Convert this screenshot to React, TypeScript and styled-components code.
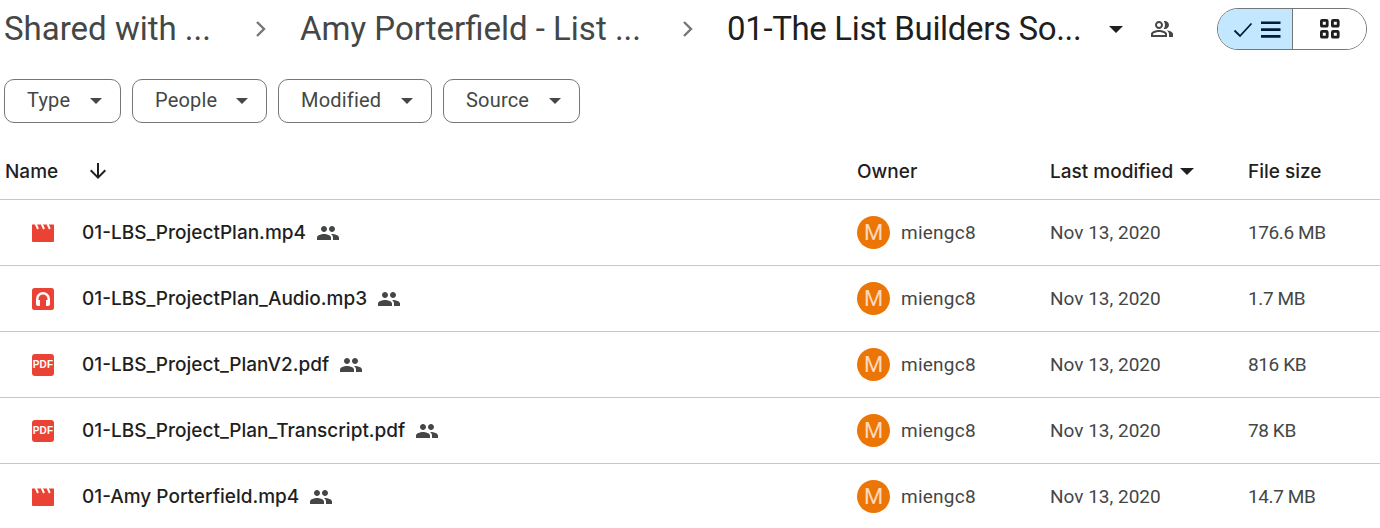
import React from "react";
import styled, { createGlobalStyle } from "styled-components";

type FileKind = "video" | "audio" | "pdf";

type FileRow = {
  name: string;
  kind: FileKind;
  size: string;
};

const files: FileRow[] = [
  { name: "01-LBS_ProjectPlan.mp4", kind: "video", size: "176.6 MB" },
  { name: "01-LBS_ProjectPlan_Audio.mp3", kind: "audio", size: "1.7 MB" },
  { name: "01-LBS_Project_PlanV2.pdf", kind: "pdf", size: "816 KB" },
  { name: "01-LBS_Project_Plan_Transcript.pdf", kind: "pdf", size: "78 KB" },
  { name: "01-Amy Porterfield.mp4", kind: "video", size: "14.7 MB" },
];

const filters = [
  { label: "Type", width: 117 },
  { label: "People", width: 135 },
  { label: "Modified", width: 154 },
  { label: "Source", width: 137 },
];

const GlobalStyle = createGlobalStyle`
  html, body {
    margin: 0;
    padding: 0;
    background: #fff;
    overflow: hidden;
  }
  body {
    font-family: Roboto, "Liberation Sans", sans-serif;
    color: #1f1f1f;
  }
`;

const Chevron = () => (
  <svg width="24" height="24" viewBox="0 0 24 24" fill="none" stroke="#747775" strokeWidth="2.4">
    <path d="M8 5l7 7-7 7" />
  </svg>
);

const SharedIcon = () => (
  <svg width="24" height="24" viewBox="0 0 24 24" fill="#444746">
    <path d="M15 8c0-1.42-.5-2.73-1.33-3.76.42-.14.86-.24 1.33-.24 2.21 0 4 1.79 4 4s-1.79 4-4 4c-.43 0-.84-.09-1.23-.21-.03-.01-.06-.02-.1-.03A5.98 5.98 0 0 0 15 8zm1.66 5.13C18.03 14.06 19 15.32 19 17v3h4v-3c0-2.18-3.58-3.47-6.34-3.87zM9 6c-1.1 0-2 .9-2 2s.9 2 2 2 2-.9 2-2-.9-2-2-2m0 6c-2.21 0-4-1.79-4-4s1.79-4 4-4 4 1.79 4 4-1.79 4-4 4zm0 3c-2.7 0-5.8 1.29-6 2.01V18h12v-1c-.2-.71-3.3-2-6-2zm0-2c2.67 0 8 1.34 8 4v3H1v-3c0-2.66 5.33-4 8-4z" />
  </svg>
);

const PeopleIcon = () => (
  <svg width="24" height="24" viewBox="0 0 24 24" fill="#444746">
    <path d="M16 11c1.66 0 2.99-1.34 2.99-3S17.66 5 16 5s-3 1.34-3 3 1.34 3 3 3zm-8 0c1.66 0 2.99-1.34 2.99-3S9.66 5 8 5 5 6.34 5 8s1.34 3 3 3zm0 2c-2.33 0-7 1.17-7 3.5V19h14v-2.5C15 14.17 10.33 13 8 13zm8 0c-.29 0-.62.02-.97.05 1.16.84 1.97 1.97 1.97 3.45V19h6v-2.5c0-2.33-4.67-3.5-7-3.5z" />
  </svg>
);

const FileIcon = ({ kind }: { kind: FileKind }) => {
  if (kind === "video") {
    return (
      <svg width="24" height="24" viewBox="0 0 24 24">
        <path fill="#ea4335" d="M1 3.5h22V20a1 1 0 0 1-1 1H2a1 1 0 0 1-1-1z" />
        <path stroke="#fff" strokeWidth="1.9" fill="none" d="M4.8 3l2.2 5M10.8 3l2.2 5M16.6 3l2.2 5" />
      </svg>
    );
  }
  if (kind === "audio") {
    return (
      <svg width="24" height="24" viewBox="0 0 24 24">
        <rect x="1" y="1" width="22" height="22" rx="2.5" fill="#ea4335" />
        <path
          fill="#fff"
          d="M12 5a7 7 0 0 0-7 7v5a2 2 0 0 0 2 2h2v-6H7.5v-1a4.5 4.5 0 0 1 9 0v1H15v6h2a2 2 0 0 0 2-2v-5a7 7 0 0 0-7-7z"
        />
      </svg>
    );
  }
  return (
    <PdfBadge>
      <span>PDF</span>
    </PdfBadge>
  );
};

export default function App() {
  return (
    <Page>
      <GlobalStyle />
      <Breadcrumbs>
        <Crumb $width={218}>Shared with ...</Crumb>
        <CrumbSeparator>
          <Chevron />
        </CrumbSeparator>
        <Crumb $width={349}>Amy Porterfield - List ...</Crumb>
        <CrumbSeparator>
          <Chevron />
        </CrumbSeparator>
        <Crumb $width={355} $current>
          01-The List Builders So...
        </Crumb>
        <TitleCaret />
        <OwnersIcon>
          <SharedIcon />
        </OwnersIcon>
        <ViewToggle>
          <ToggleHalf $active>
            <svg width="20" height="24" viewBox="0 0 20 24" fill="none" stroke="#001d35" strokeWidth="1.8">
              <path d="M1.5 13.5l5.5 5.5L18.5 6.5" />
            </svg>
            <svg width="20" height="24" viewBox="0 0 20 24" fill="#001d35">
              <path d="M0 4.500h19.500v2.600H0zM0 11.300h19.500v2.600H0zM0 18.100h19.500v2.600H0z" />
            </svg>
          </ToggleHalf>
          <ToggleHalf>
            <svg width="20" height="20" viewBox="0 0 20 20" fill="none" stroke="#1f1f1f" strokeWidth="2.800">
              <rect x="1.400" y="1.400" width="5.800" height="5.800" rx="0.800" />
              <rect x="12.400" y="1.400" width="5.800" height="5.800" rx="0.800" />
              <rect x="1.400" y="12.400" width="5.800" height="5.800" rx="0.800" />
              <rect x="12.400" y="12.400" width="5.800" height="5.800" rx="0.800" />
            </svg>
          </ToggleHalf>
        </ViewToggle>
      </Breadcrumbs>

      <FilterBar>
        {filters.map((filter) => (
          <FilterButton key={filter.label} $width={filter.width}>
            {filter.label}
            <SmallCaret />
          </FilterButton>
        ))}
      </FilterBar>

      <HeaderRow>
        <NameHeader>
          Name
          <svg width="24" height="24" viewBox="0 0 24 24" fill="#1f1f1f">
            <path d="M11 4h2v12.200l5.600-5.600L20 12l-8 8-8-8 1.400-1.400 5.600 5.600z" />
          </svg>
        </NameHeader>
        <span>Owner</span>
        <ModifiedHeader>
          Last modified
          <HeaderCaret />
        </ModifiedHeader>
        <span>File size</span>
      </HeaderRow>

      {files.map((file) => (
        <Row key={file.name}>
          <NameCell>
            <IconSlot>
              <FileIcon kind={file.kind} />
            </IconSlot>
            <FileName>{file.name}</FileName>
            <PeopleIcon />
          </NameCell>
          <OwnerCell>
            <Avatar>M</Avatar>
            miengc8
          </OwnerCell>
          <MutedCell>Nov 13, 2020</MutedCell>
          <SizeCell>{file.size}</SizeCell>
        </Row>
      ))}
    </Page>
  );
}

const Page = styled.div`
  width: 1380px;
  height: 528px;
  overflow: hidden;
  background: #fff;
`;

const Breadcrumbs = styled.div`
  display: flex;
  align-items: center;
  height: 58px;
  padding-left: 4px;
`;

const Crumb = styled.div<{ $width: number; $current?: boolean }>`
  width: ${({ $width }) => $width}px;
  flex: none;
  font-size: 33px;
  line-height: 40px;
  letter-spacing: ${({ $current }) => ($current ? "-0.35px" : "0")};
  white-space: nowrap;
  color: ${({ $current }) => ($current ? "#1f1f1f" : "#444746")};
`;

const CrumbSeparator = styled.div`
  width: 78px;
  flex: none;
  display: flex;
  justify-content: center;
`;

const TitleCaret = styled.div`
  flex: none;
  margin-left: 27px;
  border-left: 7px solid transparent;
  border-right: 7px solid transparent;
  border-top: 7px solid #1f1f1f;
`;

const OwnersIcon = styled.div`
  flex: none;
  display: flex;
  margin-left: 27px;
`;

const ViewToggle = styled.div`
  flex: none;
  display: flex;
  width: 150px;
  height: 42px;
  margin-left: 43px;
  box-sizing: border-box;
  border: 1px solid #747775;
  border-radius: 21px;
  overflow: hidden;
`;

const ToggleHalf = styled.div<{ $active?: boolean }>`
  flex: ${({ $active }) => ($active ? "0 0 75px" : "1")};
  display: flex;
  align-items: center;
  justify-content: center;
  gap: ${({ $active }) => ($active ? "8px" : "0")};
  padding-left: ${({ $active }) => ($active ? "4px" : "0")};
  box-sizing: border-box;
  background: ${({ $active }) => ($active ? "#c2e7ff" : "#fff")};
  border-right: ${({ $active }) => ($active ? "1px solid #747775" : "none")};
`;

const FilterBar = styled.div`
  display: flex;
  gap: 11px;
  padding: 21px 0 0 4px;
`;

const FilterButton = styled.div<{ $width: number }>`
  width: ${({ $width }) => $width}px;
  height: 44px;
  flex: none;
  box-sizing: border-box;
  display: flex;
  align-items: center;
  justify-content: space-between;
  padding: 0 18px 2px 22px;
  border: 1px solid #747775;
  border-radius: 10px;
  font-size: 20px;
  letter-spacing: 0.2px;
  color: #444746;
`;

const SmallCaret = styled.span`
  border-left: 6px solid transparent;
  border-right: 6px solid transparent;
  border-top: 6px solid #444746;
  margin-top: 2px;
`;

const Grid = styled.div`
  display: grid;
  grid-template-columns: 857px 193px 198px 1fr;
  align-items: center;
  box-sizing: border-box;
`;

const HeaderRow = styled(Grid)`
  height: 77px;
  border-bottom: 1px solid #c7c7c7;
  font-family: Inter, Roboto, sans-serif;
  font-size: 19px;
  font-weight: 500;
  color: #1f1f1f;
  padding-top: 20px;
`;

const NameHeader = styled.div`
  display: flex;
  align-items: center;
  gap: 28px;
  padding-left: 5px;
`;

const ModifiedHeader = styled.div`
  display: flex;
  align-items: center;
  gap: 7px;
`;

const HeaderCaret = styled.span`
  border-left: 7px solid transparent;
  border-right: 7px solid transparent;
  border-top: 7px solid #1f1f1f;
`;

const Row = styled(Grid)`
  height: 66px;
  border-bottom: 1px solid #c7c7c7;
`;

const NameCell = styled.div`
  display: flex;
  align-items: center;
  gap: 10px;
`;

const IconSlot = styled.div`
  width: 82px;
  margin-right: -10px;
  flex: none;
  display: flex;
  padding-left: 31px;
  box-sizing: border-box;
`;

const PdfBadge = styled.div`
  width: 22px;
  height: 22px;
  margin: 1px;
  border-radius: 3px;
  background: #ea4335;
  display: flex;
  align-items: center;
  justify-content: center;

  span {
    color: #fff;
    font: 700 10px "Liberation Sans", sans-serif;
    letter-spacing: 0.1px;
  }
`;

const FileName = styled.span`
  font-family: Inter, Roboto, sans-serif;
  font-size: 19px;
  font-weight: 500;
  color: #1f1f1f;
  white-space: nowrap;
`;

const OwnerCell = styled.div`
  display: flex;
  align-items: center;
  gap: 11px;
  font-size: 19px;
  letter-spacing: 0.25px;
  color: #444746;
`;

const Avatar = styled.div`
  width: 33px;
  height: 33px;
  border-radius: 50%;
  background: #eb7505;
  color: #fbd9bf;
  display: flex;
  align-items: center;
  justify-content: center;
  font-size: 22px;
  letter-spacing: 0;
`;

const MutedCell = styled.div`
  font-size: 19px;
  color: #444746;
  white-space: nowrap;
`;

const SizeCell = styled(MutedCell)`
  letter-spacing: -0.4px;
`;
